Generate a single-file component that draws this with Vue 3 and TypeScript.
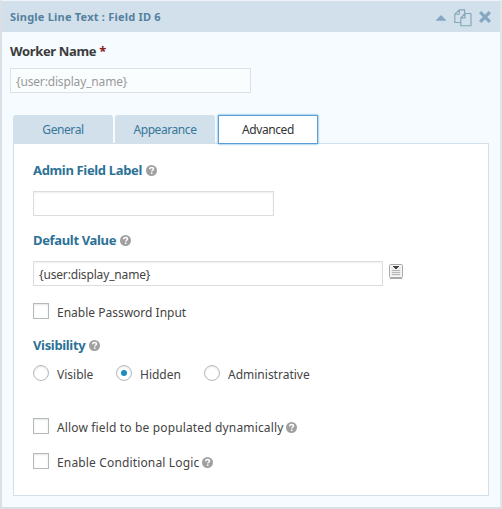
<script setup lang="ts">
import { ref, h } from 'vue'

const tabs = ['General', 'Appearance', 'Advanced']
const activeTab = ref('Advanced')
const label = ref('')
const defaultValue = ref('{user:display_name}')
const visibility = ref('Hidden')
const options = ['Visible', 'Hidden', 'Administrative']

const HelpIcon = () =>
  h('svg', { width: 11, height: 11, viewBox: '0 0 11 11' }, [
    h('circle', { cx: 5.5, cy: 5.5, r: 5.5, fill: '#a0a0a0' }),
    h('path', {
      d: 'M3.6 4.3C3.7 2.9 4.5 2.4 5.6 2.4c1.1 0 1.9.6 1.9 1.6 0 1.2-1.8 1.3-1.8 2.5',
      fill: 'none',
      stroke: '#fff',
      'stroke-width': 1.5,
    }),
    h('rect', { x: 4.9, y: 7.4, width: 1.6, height: 1.5, fill: '#fff' }),
  ])
</script>

<template>
  <div class="field">
    <header class="bar">
      <span class="title">Single Line Text : Field ID 6</span>
      <div class="actions">
        <svg class="caret" width="10" height="6" viewBox="0 0 10 6"><path d="M0 5.7V5L5 0l5 5v.7z" fill="#86a7c1" /></svg>
        <svg class="copy" width="18" height="18" viewBox="0 0 18 18">
          <g fill="none" stroke="#82a8b8" stroke-width="1.15" stroke-linejoin="round">
            <path d="M6.7 13.5H.8V5.2L5.2.8h5.4v3.6M5.2.8v4.4H.8" />
            <path d="M11 4.5h6v12.2H6.8V8.9zM11 4.5v4.4H6.8" />
          </g>
        </svg>
        <svg class="close" width="12" height="12" viewBox="0 0 12 12"><path d="M2.3 2.3l7.4 7.4M9.7 2.3l-7.4 7.4" stroke="#86a7c1" stroke-width="3.3" stroke-linecap="square" /></svg>
      </div>
    </header>

    <div class="preview">
      <div class="name"><span>Worker Name</span> <span class="star">*</span></div>
      <div class="preview-input">{user:display_name}</div>
    </div>

    <nav class="tabs">
      <button v-for="t in tabs" :key="t" class="tab" :class="{ active: t === activeTab }" @click="activeTab = t">
        <span>{{ t }}</span>
      </button>
    </nav>

    <section class="panel">
      <h3 class="heading"><span>Admin Field Label</span><HelpIcon /></h3>
      <input v-model="label" class="text short" type="text" />
      <h3 class="heading default"><span>Default Value</span><HelpIcon /></h3>
      <div class="row">
        <input v-model="defaultValue" class="text long" type="text" />
        <svg class="merge" width="14" height="15" viewBox="0 0 14 15">
          <path d="M1 14h12" stroke="#aaa" stroke-width="2" />
          <rect x=".5" y=".5" width="13" height="13" rx="1" fill="#f7f7f7" stroke="#a8a8a8" />
          <rect x="2" y="2" width="10" height="10" fill="#ececec" />
          <path d="M4 2h6v1H9v1H8v1H6V4H5V3H4z" fill="#444" />
          <path d="M3 6.5h8M3 8.5h8M3 10.5h8" stroke="#b8b8b8" />
        </svg>
      </div>
      <label class="check password"><i class="box"></i><span>Enable Password Input</span></label>
      <h3 class="heading visibility"><span>Visibility</span><HelpIcon /></h3>
      <div class="radios">
        <label v-for="o in options" :key="o" class="radio" :class="o.toLowerCase()" @click="visibility = o">
          <i class="circle" :class="{ on: visibility === o }"></i><span>{{ o }}</span>
        </label>
      </div>
      <label class="check dynamic"><i class="box"></i><span>Allow field to be populated dynamically</span><HelpIcon /></label>
      <label class="check logic"><i class="box"></i><span>Enable Conditional Logic</span><HelpIcon /></label>
    </section>
  </div>
</template>

<style>
body { background: #eef3f7; }
</style>

<style scoped>
* { box-sizing: border-box; }
.field {
  width: 502px;
  height: 509px;
  border: solid #d9dfe4;
  border-width: 1px 2px 2px 2px;
  border-top-color: #eef4f9;
  border-right-color: #e1e5e9;
  background: #f5fbfe;
  font: 13px/18px "Noto Sans", "Open Sans", sans-serif;
  color: #444;
  white-space: nowrap;
}
.bar {
  height: 31px;
  padding: 0 8px;
  display: flex;
  justify-content: space-between;
  align-items: center;
  background: #d2e0eb;
}
.title { font-size: 11px; font-weight: 700; color: #5580a0; letter-spacing: .22px; }
.actions { display: flex; align-items: center; }
.caret { margin-top: 2px; }
.copy { margin: 2px 0 0 8px; }
.close { margin: 1px 1px 0 7px; }
.preview { padding: 10px 8px 0; }
.name { font-weight: 700; color: #3c3c3c; height: 18px; letter-spacing: -.35px; }
.star { color: #8b1a24; }
.preview-input {
  width: 241px;
  height: 25px;
  margin-top: 8px;
  padding: 0 5px;
  border: 1px solid #dfe2e4;
  background: #fafdfe;
  font-size: 12px;
  line-height: 25px;
  letter-spacing: -.16px;
  color: #999;
}
.tabs { display: flex; gap: 2px; margin: 22px 0 0 11px; height: 28px; }
.tab {
  width: 100px;
  height: 28px;
  padding: 0;
  border: 0;
  border-radius: 3px 3px 0 0;
  background: #d2e0eb;
  color: #36779a;
  font: 12px/29px "Noto Sans", "Open Sans", sans-serif;
  letter-spacing: -.42px;
}
.tab.active {
  margin-left: 1px;
  height: 29px;
  border: 1px solid #5b9dd9;
  border-radius: 0;
  background: #fff;
  color: #333;
  line-height: 27px;
  box-shadow: 0 0 2px #3e9bd0;
  position: relative;
}
.panel {
  width: 476px;
  height: 353px;
  margin-left: 11px;
  padding: 17px 19px;
  border: 1px solid #d2e0eb;
  background: #fff;
}
.heading {
  display: flex;
  align-items: center;
  gap: 4px;
  height: 18px;
  margin: 0;
  font-size: 13px;
  font-weight: 700;
  letter-spacing: -.34px;
  color: #2c7196;
}
.text {
  display: block;
  height: 25px;
  border: 1px solid #ddd;
  padding: 0 5px;
  margin: 0;
  font: 12px/23px "Noto Sans", "Open Sans", sans-serif;
  letter-spacing: -.16px;
  color: #444;
  box-shadow: inset 0 1px 2px rgba(0, 0, 0, .07);
}
.short { width: 241px; margin-top: 12px; }
.long { width: 350px; padding-top: 1px; }
.default { margin-top: 15px; }
.row { display: flex; gap: 6px; margin-top: 12px; }
.merge { margin-top: 3px; }
.check, .radio { display: flex; align-items: center; height: 16px; font-size: 12px; }
.check span, .radio span { margin: 4px 0 0 8px; }
.dynamic span, .logic span { letter-spacing: .15px; }
.check svg { margin: 2px 0 0 3px; }
.box, .circle {
  flex: none;
  width: 16px;
  height: 16px;
  border: 1px solid #b4b9be;
  background: #fff;
  box-shadow: inset 0 1px 2px rgba(0, 0, 0, .1);
}
.circle { border-radius: 50%; }
.circle.on::before {
  content: "";
  display: block;
  width: 6px;
  height: 6px;
  margin: 4px;
  border-radius: 50%;
  background: #1e8cbe;
}
.password { margin-top: 17px; }
.visibility { margin-top: 17px; }
.radios { display: flex; margin-top: 11px; }
.radio.visible { width: 83px; }
.radio.hidden { width: 88px; }
.dynamic { margin-top: 37px; }
.logic { margin-top: 19px; }
</style>
